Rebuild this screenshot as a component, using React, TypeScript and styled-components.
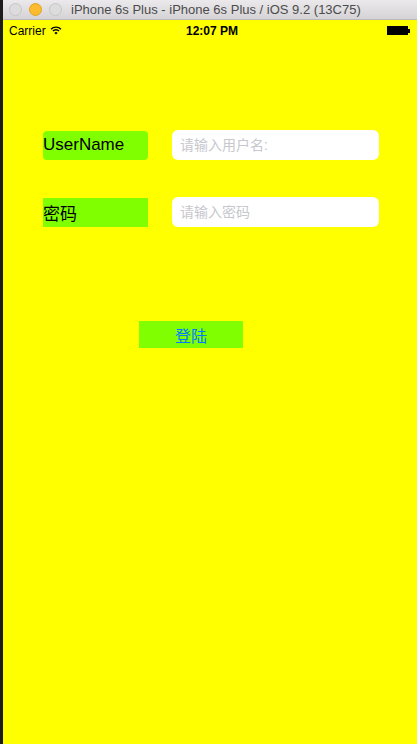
import React from "react";
import styled, { createGlobalStyle } from "styled-components";

const Global = createGlobalStyle`
  html, body { margin: 0; padding: 0; background: #ffff00; }
  body { font-family: "Liberation Sans", "Noto Sans CJK SC", sans-serif; }
  * { box-sizing: border-box; }
`;

const Window = styled.div`
  width: 417px;
  height: 744px;
  display: flex;
  flex-direction: column;
  border-left: 3px solid #1c1c1c;
  overflow: hidden;
`;

const TitleBar = styled.div`
  height: 20px;
  display: flex;
  align-items: center;
  padding-left: 6px;
  background: linear-gradient(#ebe9eb, #d5d3d5);
  border-bottom: 1px solid #b9b7b9;
`;

const Light = styled.span<{ $c: string; $b: string }>`
  width: 13px;
  height: 13px;
  border-radius: 50%;
  background: ${(p) => p.$c};
  border: 1px solid ${(p) => p.$b};
  margin-right: 7px;
  flex: none;
`;

const Title = styled.div`
  flex: 1;
  font-size: 13px;
  color: #4b4b4b;
  padding-left: 2px;
  white-space: nowrap;
`;

const Screen = styled.div`
  flex: 1;
  background: #ffff00;
  display: flex;
  flex-direction: column;
`;

const StatusBar = styled.div`
  height: 21px;
  display: flex;
  align-items: center;
  padding: 0 7px 0 6px;
  font-size: 12px;
  color: #000;
  position: relative;
`;

const Carrier = styled.div`
  display: flex;
  align-items: center;
  gap: 4px;
  flex: 1;
`;

const Time = styled.div`
  position: absolute;
  left: 183px;
  font-weight: bold;
`;

const Battery = styled.div`
  display: flex;
  align-items: center;
`;

const BatteryBody = styled.span`
  width: 21px;
  height: 9px;
  background: #000;
  border: 1px solid #000;
`;

const BatteryTip = styled.span`
  width: 2px;
  height: 4px;
  background: #000;
`;

const Form = styled.div`
  display: flex;
  flex-direction: column;
  padding: 89px 0 0 40px;
`;

const Row = styled.div<{ $mt: number }>`
  display: flex;
  align-items: center;
  gap: 24px;
  margin-top: ${(p) => p.$mt}px;
`;

const Label = styled.div<{ $r: number }>`
  width: 105px;
  height: 29px;
  background: #80ff00;
  border-radius: ${(p) => p.$r}px;
  display: flex;
  align-items: center;
  font-size: 17px;
  color: #000;
`;

const Input = styled.input`
  width: 207px;
  height: 30px;
  border: none;
  border-radius: 6px;
  background: #fff;
  padding: 0 8px;
  font-size: 14px;
  font-family: "Liberation Sans", "Noto Sans CJK SC", sans-serif;
  outline: none;
  &::placeholder { color: #c7c7cd; }
`;

const Button = styled.button`
  margin: 94px 0 0 96px;
  width: 104px;
  height: 27px;
  border: none;
  background: #80ff00;
  color: #007aff;
  font-size: 16px;
  font-family: "Liberation Sans", "Noto Sans CJK SC", sans-serif;
  padding: 0;
`;

const Wifi = () => (
  <svg width="12" height="9" viewBox="0 0 12 9">
    <path d="M1 3.2 A7 7 0 0 1 11 3.2" stroke="#000" strokeWidth="1.4" fill="none" />
    <path d="M2.9 5.1 A4.3 4.3 0 0 1 9.1 5.1" stroke="#000" strokeWidth="1.4" fill="none" />
    <path d="M6 8.6 L4.4 6.9 A2.2 2.2 0 0 1 7.6 6.9 Z" fill="#000" />
  </svg>
);

export default function App() {
  return (
    <>
      <Global />
      <Window>
        <TitleBar>
          <Light $c="#dcdcdc" $b="#c6c6c6" />
          <Light $c="#fdbc2f" $b="#e0a324" />
          <Light $c="#dcdcdc" $b="#c6c6c6" />
          <Title>iPhone 6s Plus - iPhone 6s Plus / iOS 9.2 (13C75)</Title>
        </TitleBar>
        <Screen>
          <StatusBar>
            <Carrier>
              Carrier <Wifi />
            </Carrier>
            <Time>12:07 PM</Time>
            <Battery>
              <BatteryBody />
              <BatteryTip />
            </Battery>
          </StatusBar>
          <Form>
            <Row $mt={0}>
              <Label $r={4}>UserName</Label>
              <Input placeholder="请输入用户名:" />
            </Row>
            <Row $mt={37}>
              <Label $r={0}>密码</Label>
              <Input placeholder="请输入密码" />
            </Row>
            <Button>登陆</Button>
          </Form>
        </Screen>
      </Window>
    </>
  );
}
